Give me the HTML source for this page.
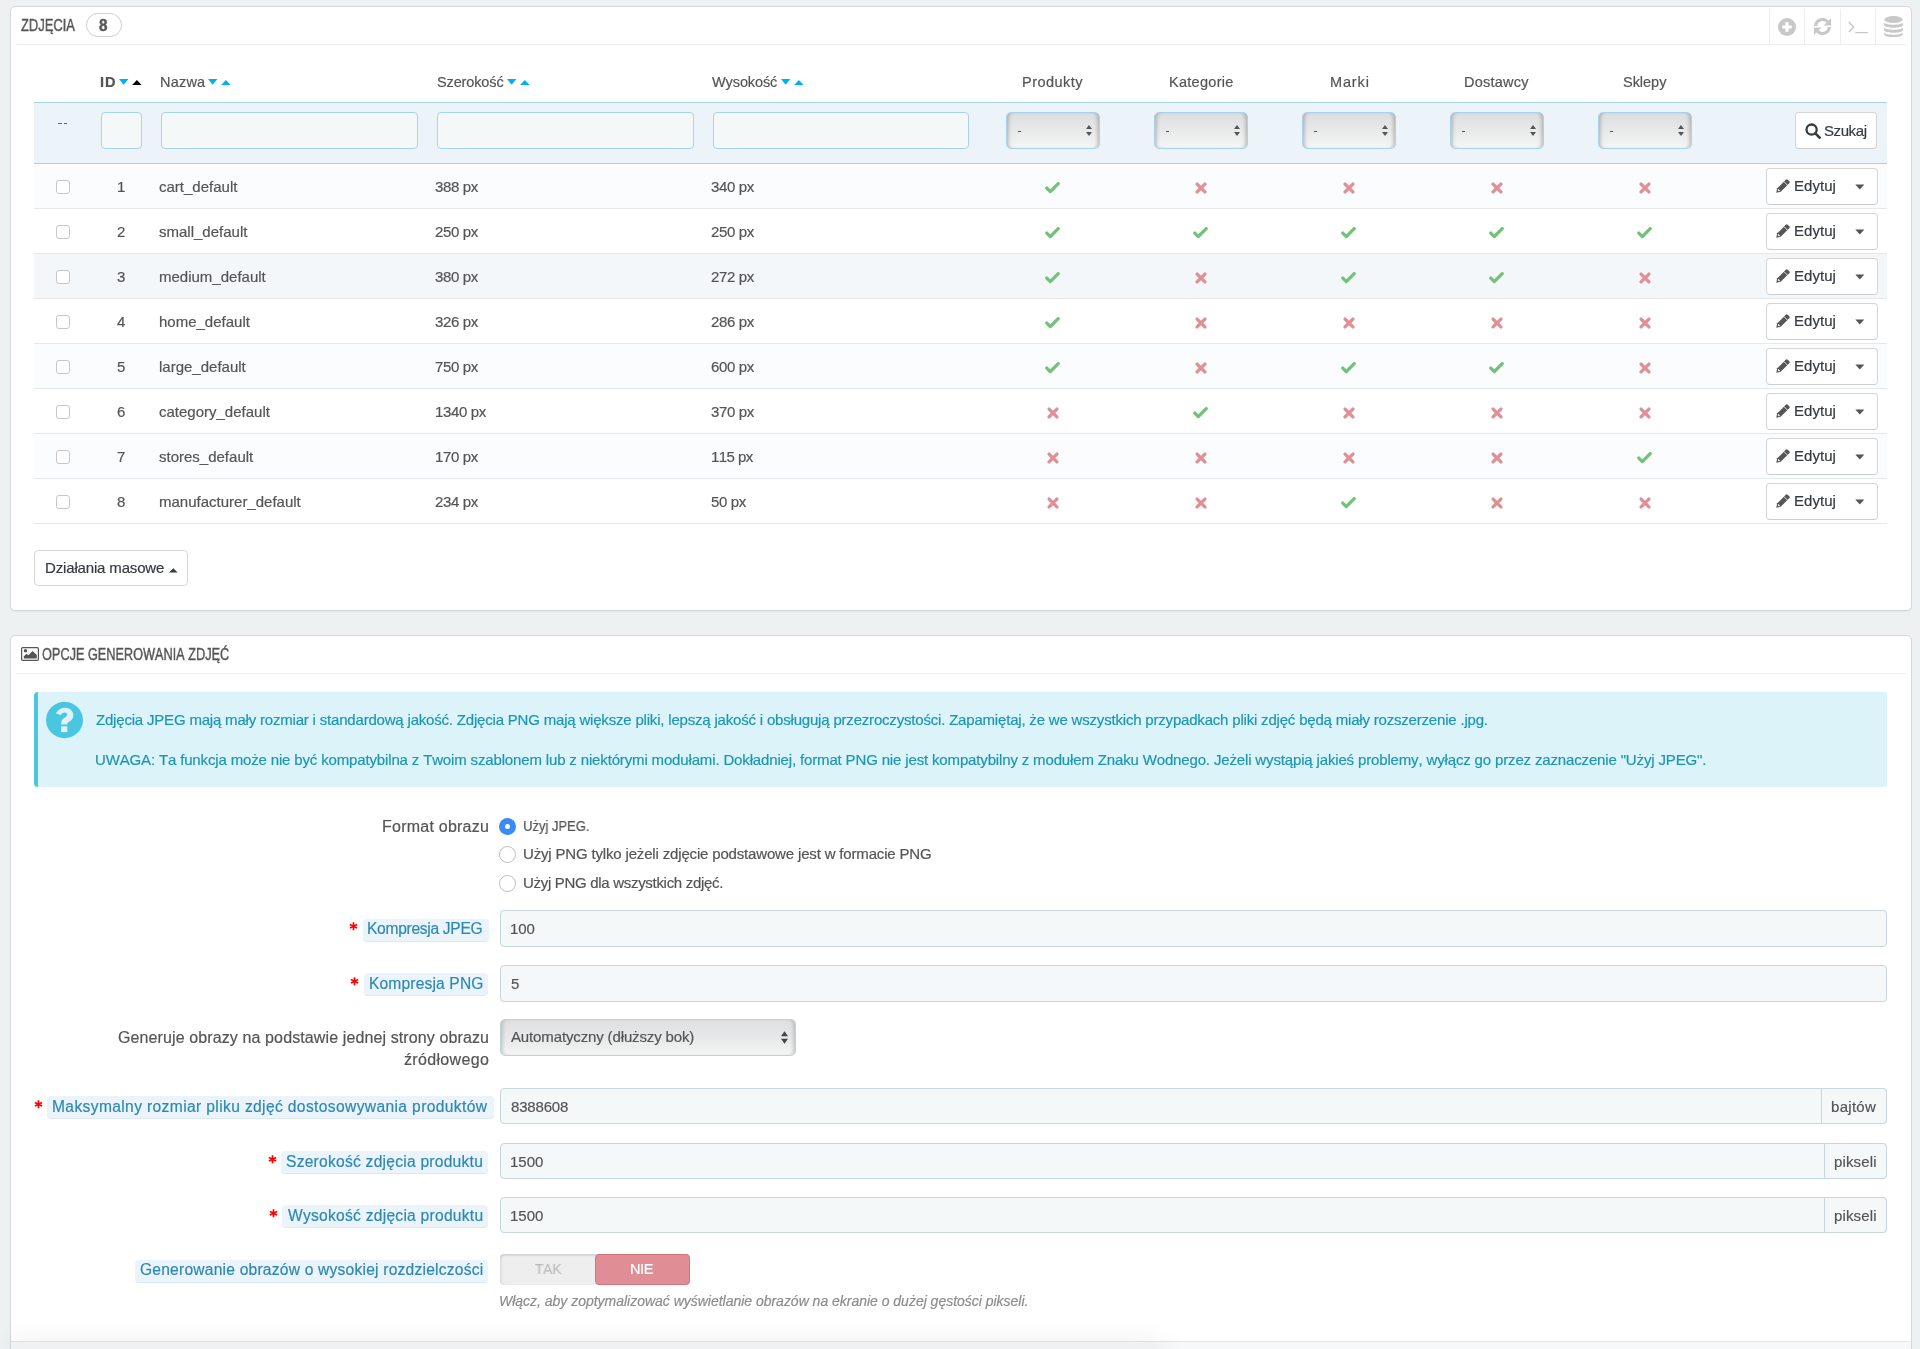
<!DOCTYPE html><html><head><meta charset="utf-8"><style>
*{box-sizing:border-box;margin:0;padding:0}
html,body{width:1920px;height:1349px;overflow:hidden}
body{background:#eef1f2;font-family:"Liberation Sans",sans-serif;color:#555;position:relative;font-size:15px;font-kerning:none}
.abs{position:absolute}
.panel{position:absolute;background:#fff;border:1px solid #d3d8db;border-radius:5px;box-shadow:0 1px 1px rgba(0,0,0,0.04)}
.hd{position:absolute;white-space:nowrap;color:#555;transform-origin:0 0;line-height:20px;font-size:17.4px;-webkit-text-stroke:0.45px #555;will-change:transform}
.hline{position:absolute;height:1px;background:#eeeeee}
.tx{position:absolute;white-space:nowrap;will-change:transform;-webkit-text-stroke-width:0.2px}
.ic{position:absolute;display:block}
.sep{position:absolute;width:1px;background:#eeeeee;top:9px;height:35px}
.finput{position:absolute;border:1px solid #a9d3ec;border-radius:4px;background:#f5f8f9;height:37px;top:112px}
.fsel{position:absolute;top:112px;width:94px;height:37px;border:1px solid #a9d3ec;border-radius:5px;background:linear-gradient(#dcdddf,#e9eaea 55%,#f6f6f6);box-shadow:inset 4px 0 4px -3px rgba(0,0,0,.28),inset -4px 0 4px -3px rgba(0,0,0,.28)}
.arr{position:absolute;width:0;height:0;border-left:3px solid transparent;border-right:3px solid transparent}
.cb{position:absolute;width:14px;height:14px;border:1px solid #c7c7c7;border-radius:3px;background:#fff;left:56px}
.row{position:absolute;left:34px;width:1853px;height:45px;border-bottom:1px solid #e5e9ec}
.btn{position:absolute;background:#fff;border:1px solid #d6d6d6;border-bottom-color:#cdcdcd;border-radius:4px}
.lblbox{position:absolute;height:22px;background:#ebf4fb;border-radius:4px;box-shadow:0 1px 0 #dde9f2}
.inp{position:absolute;left:500px;width:1387px;height:37px;border:1px solid #c9d6dc;border-radius:4px;background:#f5f8f9}
.addon{position:absolute;top:-1px;right:-1px;height:37px;border:1px solid #c9d6dc;border-radius:0 4px 4px 0;background:#f5f8f9}
</style></head><body>
<div class="panel" style="left:10px;top:6px;width:1902px;height:605px"></div>
<div class="hd" style="left:21.09px;top:14.97px;transform:scaleX(0.7439)">ZDJĘCIA</div>
<div class="abs" style="left:86px;top:13px;width:36px;height:24px;border:1px solid #cfcfcf;border-radius:12px;background:#fff"></div>
<div class="hd" style="font-weight:bold;left:98.55px;top:14.97px;transform:scaleX(0.8682)">8</div>
<div class="hline" style="left:15px;top:44px;width:1891px"></div>
<div class="sep" style="left:1769px"></div>
<div class="sep" style="left:1804px"></div>
<div class="sep" style="left:1840px"></div>
<div class="sep" style="left:1875px"></div>
<svg class="ic" style="left:1778px;top:18px" width="18" height="18" viewBox="0 0 18 18"><circle cx="9" cy="9" r="9" fill="#c8c8c8"/><path d="M9 4.3V13.7M4.3 9H13.7" stroke="#fff" stroke-width="3.2"/></svg>
<svg class="ic" style="left:1813px;top:17px" width="19" height="19" viewBox="0 0 19 19"><path d="M2.6 9A6.9 6.9 0 0 1 15.2 5.6" fill="none" stroke="#c8c8c8" stroke-width="3.2"/><path d="M18 1.2V8.6H10.6Z" fill="#c8c8c8"/><path d="M16.4 10A6.9 6.9 0 0 1 3.8 13.4" fill="none" stroke="#c8c8c8" stroke-width="3.2"/><path d="M1 17.8V10.4H8.4Z" fill="#c8c8c8"/></svg>
<svg class="ic" style="left:1848px;top:21px" width="21" height="13" viewBox="0 0 21 13"><path d="M0.8 0.9L5.8 5.9L0.8 10.9" fill="none" stroke="#c8c8c8" stroke-width="1.4"/><path d="M7.3 11.6H20" stroke="#c8c8c8" stroke-width="1.3"/></svg>
<svg class="ic" style="left:1884px;top:16px" width="19" height="22" viewBox="0 0 19 22"><ellipse cx="9.5" cy="3.6" rx="9.3" ry="3.5" fill="#c8c8c8"/><path d="M0.2 5.9C0.2 9.6 18.8 9.6 18.8 5.9V9C18.8 12.7 0.2 12.7 0.2 9Z" fill="#c8c8c8"/><path d="M0.2 11C0.2 14.7 18.8 14.7 18.8 11V14C18.8 17.7 0.2 17.7 0.2 14Z" fill="#c8c8c8"/><path d="M0.2 16C0.2 19.7 18.8 19.7 18.8 16V18.2C18.8 22 0.2 22 0.2 18.2Z" fill="#c8c8c8"/></svg>
<div class="tx" style="left:100.03px;top:72.47px;font-size:14.5px;line-height:20px;letter-spacing:0.8759px;font-weight:bold;color:#555555">ID</div>
<svg class="ic" style="left:119.4px;top:79px" width="23" height="6" viewBox="0 0 23 6"><path d="M0 0H9.4L4.7 5.7Z" fill="#00aff0"/><path d="M13.2 5.9H22.6L17.9 0.9Z" fill="#000"/></svg>
<div class="tx" style="left:159.81px;top:72.47px;font-size:14.5px;line-height:20px;letter-spacing:0.2130px;color:#555555">Nazwa</div>
<svg class="ic" style="left:208.4px;top:79px" width="23" height="6" viewBox="0 0 23 6"><path d="M0 0H9.4L4.7 5.7Z" fill="#00aff0"/><path d="M13.2 5.9H22.6L17.9 0.9Z" fill="#00aff0"/></svg>
<div class="tx" style="left:436.65px;top:72.47px;font-size:14.5px;line-height:20px;letter-spacing:-0.1328px;color:#555555">Szerokość</div>
<svg class="ic" style="left:506.6px;top:79px" width="23" height="6" viewBox="0 0 23 6"><path d="M0 0H9.4L4.7 5.7Z" fill="#00aff0"/><path d="M13.2 5.9H22.6L17.9 0.9Z" fill="#00aff0"/></svg>
<div class="tx" style="left:712.34px;top:72.47px;font-size:14.5px;line-height:20px;letter-spacing:-0.1015px;color:#555555">Wysokość</div>
<svg class="ic" style="left:781.4px;top:79px" width="23" height="6" viewBox="0 0 23 6"><path d="M0 0H9.4L4.7 5.7Z" fill="#00aff0"/><path d="M13.2 5.9H22.6L17.9 0.9Z" fill="#00aff0"/></svg>
<div class="tx" style="left:1022.31px;top:72.47px;font-size:14.5px;line-height:20px;letter-spacing:0.4701px;color:#555555">Produkty</div>
<div class="tx" style="left:1168.61px;top:72.47px;font-size:14.5px;line-height:20px;letter-spacing:0.2807px;color:#555555">Kategorie</div>
<div class="tx" style="left:1329.51px;top:72.47px;font-size:14.5px;line-height:20px;letter-spacing:0.8535px;color:#555555">Marki</div>
<div class="tx" style="left:1464.01px;top:72.47px;font-size:14.5px;line-height:20px;letter-spacing:0.2390px;color:#555555">Dostawcy</div>
<div class="tx" style="left:1622.65px;top:72.47px;font-size:14.5px;line-height:20px;letter-spacing:-0.0284px;color:#555555">Sklepy</div>
<div class="abs" style="left:34px;top:102px;width:1853px;height:62px;background:#ecf4fa;border-top:1px solid #a6d1ec;border-bottom:1px solid #a6d1ec"></div>
<div class="abs" style="left:58px;top:123px;width:3.5px;height:1.4px;background:#666"></div><div class="abs" style="left:63.5px;top:123px;width:3.5px;height:1.4px;background:#666"></div>
<div class="finput" style="left:101px;width:41px"></div>
<div class="finput" style="left:161px;width:257px"></div>
<div class="finput" style="left:437px;width:257px"></div>
<div class="finput" style="left:713px;width:256px"></div>
<div class="fsel" style="left:1006px"><div class="abs" style="left:10.5px;top:18px;width:3.5px;height:1.3px;background:#555"></div><div class="arr" style="left:79px;top:12px;border-bottom:4.5px solid #555"></div><div class="arr" style="left:79px;top:19px;border-top:4.5px solid #555"></div></div>
<div class="fsel" style="left:1154px"><div class="abs" style="left:10.5px;top:18px;width:3.5px;height:1.3px;background:#555"></div><div class="arr" style="left:79px;top:12px;border-bottom:4.5px solid #555"></div><div class="arr" style="left:79px;top:19px;border-top:4.5px solid #555"></div></div>
<div class="fsel" style="left:1302px"><div class="abs" style="left:10.5px;top:18px;width:3.5px;height:1.3px;background:#555"></div><div class="arr" style="left:79px;top:12px;border-bottom:4.5px solid #555"></div><div class="arr" style="left:79px;top:19px;border-top:4.5px solid #555"></div></div>
<div class="fsel" style="left:1450px"><div class="abs" style="left:10.5px;top:18px;width:3.5px;height:1.3px;background:#555"></div><div class="arr" style="left:79px;top:12px;border-bottom:4.5px solid #555"></div><div class="arr" style="left:79px;top:19px;border-top:4.5px solid #555"></div></div>
<div class="fsel" style="left:1598px"><div class="abs" style="left:10.5px;top:18px;width:3.5px;height:1.3px;background:#555"></div><div class="arr" style="left:79px;top:12px;border-bottom:4.5px solid #555"></div><div class="arr" style="left:79px;top:19px;border-top:4.5px solid #555"></div></div>
<div class="btn" style="left:1795px;top:112px;width:82px;height:37px"></div>
<svg class="ic" style="left:1805px;top:123px" width="17" height="16" viewBox="0 0 17 16"><circle cx="6.6" cy="6.6" r="5.1" fill="none" stroke="#363a41" stroke-width="2.3"/><path d="M10.4 10.4L14.6 14.6" stroke="#363a41" stroke-width="2.7" stroke-linecap="round"/></svg>
<div class="tx" style="left:1824.33px;top:120.60px;font-size:15px;line-height:20px;letter-spacing:-0.4089px;color:#363a41">Szukaj</div>
<div class="row" style="top:164px;background:#fafcfe"></div>
<div class="cb" style="top:180px"></div>
<div class="tx" style="left:116.63px;top:176.60px;font-size:15px;line-height:20px;color:#555555">1</div>
<div class="tx" style="left:159.17px;top:176.60px;font-size:15px;line-height:20px;color:#555555">cart_default</div>
<div class="tx" style="left:435.43px;top:176.60px;font-size:15px;line-height:20px;letter-spacing:-0.3712px;color:#555555">388 px</div>
<div class="tx" style="left:711.23px;top:176.60px;font-size:15px;line-height:20px;letter-spacing:-0.3712px;color:#555555">340 px</div>
<div class="abs" style="left:1045.4px;top:181.8px"><svg width="15" height="12" viewBox="0 0 15 12" style="display:block"><path d="M1.8 6.1 L5.3 9.6 L13.2 1.7" fill="none" stroke="#72c279" stroke-width="3.3" stroke-linecap="round" stroke-linejoin="round"/></svg></div>
<div class="abs" style="left:1194.9px;top:181.8px"><svg width="12" height="12" viewBox="0 0 12 12" style="display:block"><path d="M2.1 2.1 L9.9 9.9 M9.9 2.1 L2.1 9.9" fill="none" stroke="#e08f95" stroke-width="3.3" stroke-linecap="round"/></svg></div>
<div class="abs" style="left:1342.9px;top:181.8px"><svg width="12" height="12" viewBox="0 0 12 12" style="display:block"><path d="M2.1 2.1 L9.9 9.9 M9.9 2.1 L2.1 9.9" fill="none" stroke="#e08f95" stroke-width="3.3" stroke-linecap="round"/></svg></div>
<div class="abs" style="left:1490.9px;top:181.8px"><svg width="12" height="12" viewBox="0 0 12 12" style="display:block"><path d="M2.1 2.1 L9.9 9.9 M9.9 2.1 L2.1 9.9" fill="none" stroke="#e08f95" stroke-width="3.3" stroke-linecap="round"/></svg></div>
<div class="abs" style="left:1638.9px;top:181.8px"><svg width="12" height="12" viewBox="0 0 12 12" style="display:block"><path d="M2.1 2.1 L9.9 9.9 M9.9 2.1 L2.1 9.9" fill="none" stroke="#e08f95" stroke-width="3.3" stroke-linecap="round"/></svg></div>
<div class="btn" style="left:1766px;top:168px;width:112px;height:37px"></div>
<svg class="ic" style="left:1775.3px;top:179px" width="15" height="15" viewBox="0 0 15 15"><g transform="rotate(-45 7.5 7.5)"><path d="M-1.3 7.5L2.4 5H14.6Q16 5 16 6.4V8.6Q16 10 14.6 10H2.4Z" fill="#555"/><path d="M12 4.6V10.4" stroke="#fff" stroke-width="0.8"/><path d="M2.2 6.4V8.6" stroke="#fff" stroke-width="1.2"/><path d="M3.5 5.5H11.6" stroke="#888" stroke-width="0.6"/></g></svg>
<div class="tx" style="left:1793.77px;top:176.40px;font-size:15px;line-height:20px;letter-spacing:0.0282px;color:#363a41">Edytuj</div>
<svg class="ic" style="left:1855px;top:184px" width="10" height="6" viewBox="0 0 10 6"><path d="M0.3 0.5H9.3L4.8 5.5Z" fill="#555"/></svg>
<div class="row" style="top:209px;background:#ffffff"></div>
<div class="cb" style="top:225px"></div>
<div class="tx" style="left:116.83px;top:221.60px;font-size:15px;line-height:20px;color:#555555">2</div>
<div class="tx" style="left:159.38px;top:221.60px;font-size:15px;line-height:20px;color:#555555">small_default</div>
<div class="tx" style="left:435.25px;top:221.60px;font-size:15px;line-height:20px;letter-spacing:-0.3712px;color:#555555">250 px</div>
<div class="tx" style="left:711.05px;top:221.60px;font-size:15px;line-height:20px;letter-spacing:-0.3712px;color:#555555">250 px</div>
<div class="abs" style="left:1045.4px;top:226.8px"><svg width="15" height="12" viewBox="0 0 15 12" style="display:block"><path d="M1.8 6.1 L5.3 9.6 L13.2 1.7" fill="none" stroke="#72c279" stroke-width="3.3" stroke-linecap="round" stroke-linejoin="round"/></svg></div>
<div class="abs" style="left:1193.4px;top:226.8px"><svg width="15" height="12" viewBox="0 0 15 12" style="display:block"><path d="M1.8 6.1 L5.3 9.6 L13.2 1.7" fill="none" stroke="#72c279" stroke-width="3.3" stroke-linecap="round" stroke-linejoin="round"/></svg></div>
<div class="abs" style="left:1341.4px;top:226.8px"><svg width="15" height="12" viewBox="0 0 15 12" style="display:block"><path d="M1.8 6.1 L5.3 9.6 L13.2 1.7" fill="none" stroke="#72c279" stroke-width="3.3" stroke-linecap="round" stroke-linejoin="round"/></svg></div>
<div class="abs" style="left:1489.4px;top:226.8px"><svg width="15" height="12" viewBox="0 0 15 12" style="display:block"><path d="M1.8 6.1 L5.3 9.6 L13.2 1.7" fill="none" stroke="#72c279" stroke-width="3.3" stroke-linecap="round" stroke-linejoin="round"/></svg></div>
<div class="abs" style="left:1637.4px;top:226.8px"><svg width="15" height="12" viewBox="0 0 15 12" style="display:block"><path d="M1.8 6.1 L5.3 9.6 L13.2 1.7" fill="none" stroke="#72c279" stroke-width="3.3" stroke-linecap="round" stroke-linejoin="round"/></svg></div>
<div class="btn" style="left:1766px;top:213px;width:112px;height:37px"></div>
<svg class="ic" style="left:1775.3px;top:224px" width="15" height="15" viewBox="0 0 15 15"><g transform="rotate(-45 7.5 7.5)"><path d="M-1.3 7.5L2.4 5H14.6Q16 5 16 6.4V8.6Q16 10 14.6 10H2.4Z" fill="#555"/><path d="M12 4.6V10.4" stroke="#fff" stroke-width="0.8"/><path d="M2.2 6.4V8.6" stroke="#fff" stroke-width="1.2"/><path d="M3.5 5.5H11.6" stroke="#888" stroke-width="0.6"/></g></svg>
<div class="tx" style="left:1793.77px;top:221.40px;font-size:15px;line-height:20px;letter-spacing:0.0282px;color:#363a41">Edytuj</div>
<svg class="ic" style="left:1855px;top:229px" width="10" height="6" viewBox="0 0 10 6"><path d="M0.3 0.5H9.3L4.8 5.5Z" fill="#555"/></svg>
<div class="row" style="top:254px;background:#f4f7f9"></div>
<div class="cb" style="top:270px"></div>
<div class="tx" style="left:116.88px;top:266.60px;font-size:15px;line-height:20px;color:#555555">3</div>
<div class="tx" style="left:158.81px;top:266.60px;font-size:15px;line-height:20px;color:#555555">medium_default</div>
<div class="tx" style="left:435.43px;top:266.60px;font-size:15px;line-height:20px;letter-spacing:-0.3712px;color:#555555">380 px</div>
<div class="tx" style="left:711.05px;top:266.60px;font-size:15px;line-height:20px;letter-spacing:-0.3712px;color:#555555">272 px</div>
<div class="abs" style="left:1045.4px;top:271.8px"><svg width="15" height="12" viewBox="0 0 15 12" style="display:block"><path d="M1.8 6.1 L5.3 9.6 L13.2 1.7" fill="none" stroke="#72c279" stroke-width="3.3" stroke-linecap="round" stroke-linejoin="round"/></svg></div>
<div class="abs" style="left:1194.9px;top:271.8px"><svg width="12" height="12" viewBox="0 0 12 12" style="display:block"><path d="M2.1 2.1 L9.9 9.9 M9.9 2.1 L2.1 9.9" fill="none" stroke="#e08f95" stroke-width="3.3" stroke-linecap="round"/></svg></div>
<div class="abs" style="left:1341.4px;top:271.8px"><svg width="15" height="12" viewBox="0 0 15 12" style="display:block"><path d="M1.8 6.1 L5.3 9.6 L13.2 1.7" fill="none" stroke="#72c279" stroke-width="3.3" stroke-linecap="round" stroke-linejoin="round"/></svg></div>
<div class="abs" style="left:1489.4px;top:271.8px"><svg width="15" height="12" viewBox="0 0 15 12" style="display:block"><path d="M1.8 6.1 L5.3 9.6 L13.2 1.7" fill="none" stroke="#72c279" stroke-width="3.3" stroke-linecap="round" stroke-linejoin="round"/></svg></div>
<div class="abs" style="left:1638.9px;top:271.8px"><svg width="12" height="12" viewBox="0 0 12 12" style="display:block"><path d="M2.1 2.1 L9.9 9.9 M9.9 2.1 L2.1 9.9" fill="none" stroke="#e08f95" stroke-width="3.3" stroke-linecap="round"/></svg></div>
<div class="btn" style="left:1766px;top:258px;width:112px;height:37px"></div>
<svg class="ic" style="left:1775.3px;top:269px" width="15" height="15" viewBox="0 0 15 15"><g transform="rotate(-45 7.5 7.5)"><path d="M-1.3 7.5L2.4 5H14.6Q16 5 16 6.4V8.6Q16 10 14.6 10H2.4Z" fill="#555"/><path d="M12 4.6V10.4" stroke="#fff" stroke-width="0.8"/><path d="M2.2 6.4V8.6" stroke="#fff" stroke-width="1.2"/><path d="M3.5 5.5H11.6" stroke="#888" stroke-width="0.6"/></g></svg>
<div class="tx" style="left:1793.77px;top:266.40px;font-size:15px;line-height:20px;letter-spacing:0.0282px;color:#363a41">Edytuj</div>
<svg class="ic" style="left:1855px;top:274px" width="10" height="6" viewBox="0 0 10 6"><path d="M0.3 0.5H9.3L4.8 5.5Z" fill="#555"/></svg>
<div class="row" style="top:299px;background:#ffffff"></div>
<div class="cb" style="top:315px"></div>
<div class="tx" style="left:116.88px;top:311.60px;font-size:15px;line-height:20px;color:#555555">4</div>
<div class="tx" style="left:158.77px;top:311.60px;font-size:15px;line-height:20px;color:#555555">home_default</div>
<div class="tx" style="left:435.43px;top:311.60px;font-size:15px;line-height:20px;letter-spacing:-0.3712px;color:#555555">326 px</div>
<div class="tx" style="left:711.05px;top:311.60px;font-size:15px;line-height:20px;letter-spacing:-0.3712px;color:#555555">286 px</div>
<div class="abs" style="left:1045.4px;top:316.8px"><svg width="15" height="12" viewBox="0 0 15 12" style="display:block"><path d="M1.8 6.1 L5.3 9.6 L13.2 1.7" fill="none" stroke="#72c279" stroke-width="3.3" stroke-linecap="round" stroke-linejoin="round"/></svg></div>
<div class="abs" style="left:1194.9px;top:316.8px"><svg width="12" height="12" viewBox="0 0 12 12" style="display:block"><path d="M2.1 2.1 L9.9 9.9 M9.9 2.1 L2.1 9.9" fill="none" stroke="#e08f95" stroke-width="3.3" stroke-linecap="round"/></svg></div>
<div class="abs" style="left:1342.9px;top:316.8px"><svg width="12" height="12" viewBox="0 0 12 12" style="display:block"><path d="M2.1 2.1 L9.9 9.9 M9.9 2.1 L2.1 9.9" fill="none" stroke="#e08f95" stroke-width="3.3" stroke-linecap="round"/></svg></div>
<div class="abs" style="left:1490.9px;top:316.8px"><svg width="12" height="12" viewBox="0 0 12 12" style="display:block"><path d="M2.1 2.1 L9.9 9.9 M9.9 2.1 L2.1 9.9" fill="none" stroke="#e08f95" stroke-width="3.3" stroke-linecap="round"/></svg></div>
<div class="abs" style="left:1638.9px;top:316.8px"><svg width="12" height="12" viewBox="0 0 12 12" style="display:block"><path d="M2.1 2.1 L9.9 9.9 M9.9 2.1 L2.1 9.9" fill="none" stroke="#e08f95" stroke-width="3.3" stroke-linecap="round"/></svg></div>
<div class="btn" style="left:1766px;top:303px;width:112px;height:37px"></div>
<svg class="ic" style="left:1775.3px;top:314px" width="15" height="15" viewBox="0 0 15 15"><g transform="rotate(-45 7.5 7.5)"><path d="M-1.3 7.5L2.4 5H14.6Q16 5 16 6.4V8.6Q16 10 14.6 10H2.4Z" fill="#555"/><path d="M12 4.6V10.4" stroke="#fff" stroke-width="0.8"/><path d="M2.2 6.4V8.6" stroke="#fff" stroke-width="1.2"/><path d="M3.5 5.5H11.6" stroke="#888" stroke-width="0.6"/></g></svg>
<div class="tx" style="left:1793.77px;top:311.40px;font-size:15px;line-height:20px;letter-spacing:0.0282px;color:#363a41">Edytuj</div>
<svg class="ic" style="left:1855px;top:319px" width="10" height="6" viewBox="0 0 10 6"><path d="M0.3 0.5H9.3L4.8 5.5Z" fill="#555"/></svg>
<div class="row" style="top:344px;background:#fafcfe"></div>
<div class="cb" style="top:360px"></div>
<div class="tx" style="left:116.84px;top:356.60px;font-size:15px;line-height:20px;color:#555555">5</div>
<div class="tx" style="left:158.80px;top:356.60px;font-size:15px;line-height:20px;color:#555555">large_default</div>
<div class="tx" style="left:435.24px;top:356.60px;font-size:15px;line-height:20px;letter-spacing:-0.3712px;color:#555555">750 px</div>
<div class="tx" style="left:711.03px;top:356.60px;font-size:15px;line-height:20px;letter-spacing:-0.3712px;color:#555555">600 px</div>
<div class="abs" style="left:1045.4px;top:361.8px"><svg width="15" height="12" viewBox="0 0 15 12" style="display:block"><path d="M1.8 6.1 L5.3 9.6 L13.2 1.7" fill="none" stroke="#72c279" stroke-width="3.3" stroke-linecap="round" stroke-linejoin="round"/></svg></div>
<div class="abs" style="left:1194.9px;top:361.8px"><svg width="12" height="12" viewBox="0 0 12 12" style="display:block"><path d="M2.1 2.1 L9.9 9.9 M9.9 2.1 L2.1 9.9" fill="none" stroke="#e08f95" stroke-width="3.3" stroke-linecap="round"/></svg></div>
<div class="abs" style="left:1341.4px;top:361.8px"><svg width="15" height="12" viewBox="0 0 15 12" style="display:block"><path d="M1.8 6.1 L5.3 9.6 L13.2 1.7" fill="none" stroke="#72c279" stroke-width="3.3" stroke-linecap="round" stroke-linejoin="round"/></svg></div>
<div class="abs" style="left:1489.4px;top:361.8px"><svg width="15" height="12" viewBox="0 0 15 12" style="display:block"><path d="M1.8 6.1 L5.3 9.6 L13.2 1.7" fill="none" stroke="#72c279" stroke-width="3.3" stroke-linecap="round" stroke-linejoin="round"/></svg></div>
<div class="abs" style="left:1638.9px;top:361.8px"><svg width="12" height="12" viewBox="0 0 12 12" style="display:block"><path d="M2.1 2.1 L9.9 9.9 M9.9 2.1 L2.1 9.9" fill="none" stroke="#e08f95" stroke-width="3.3" stroke-linecap="round"/></svg></div>
<div class="btn" style="left:1766px;top:348px;width:112px;height:37px"></div>
<svg class="ic" style="left:1775.3px;top:359px" width="15" height="15" viewBox="0 0 15 15"><g transform="rotate(-45 7.5 7.5)"><path d="M-1.3 7.5L2.4 5H14.6Q16 5 16 6.4V8.6Q16 10 14.6 10H2.4Z" fill="#555"/><path d="M12 4.6V10.4" stroke="#fff" stroke-width="0.8"/><path d="M2.2 6.4V8.6" stroke="#fff" stroke-width="1.2"/><path d="M3.5 5.5H11.6" stroke="#888" stroke-width="0.6"/></g></svg>
<div class="tx" style="left:1793.77px;top:356.40px;font-size:15px;line-height:20px;letter-spacing:0.0282px;color:#363a41">Edytuj</div>
<svg class="ic" style="left:1855px;top:364px" width="10" height="6" viewBox="0 0 10 6"><path d="M0.3 0.5H9.3L4.8 5.5Z" fill="#555"/></svg>
<div class="row" style="top:389px;background:#ffffff"></div>
<div class="cb" style="top:405px"></div>
<div class="tx" style="left:116.78px;top:401.60px;font-size:15px;line-height:20px;color:#555555">6</div>
<div class="tx" style="left:159.17px;top:401.60px;font-size:15px;line-height:20px;color:#555555">category_default</div>
<div class="tx" style="left:434.86px;top:401.60px;font-size:15px;line-height:20px;letter-spacing:-0.3700px;color:#555555">1340 px</div>
<div class="tx" style="left:711.23px;top:401.60px;font-size:15px;line-height:20px;letter-spacing:-0.3712px;color:#555555">370 px</div>
<div class="abs" style="left:1046.9px;top:406.8px"><svg width="12" height="12" viewBox="0 0 12 12" style="display:block"><path d="M2.1 2.1 L9.9 9.9 M9.9 2.1 L2.1 9.9" fill="none" stroke="#e08f95" stroke-width="3.3" stroke-linecap="round"/></svg></div>
<div class="abs" style="left:1193.4px;top:406.8px"><svg width="15" height="12" viewBox="0 0 15 12" style="display:block"><path d="M1.8 6.1 L5.3 9.6 L13.2 1.7" fill="none" stroke="#72c279" stroke-width="3.3" stroke-linecap="round" stroke-linejoin="round"/></svg></div>
<div class="abs" style="left:1342.9px;top:406.8px"><svg width="12" height="12" viewBox="0 0 12 12" style="display:block"><path d="M2.1 2.1 L9.9 9.9 M9.9 2.1 L2.1 9.9" fill="none" stroke="#e08f95" stroke-width="3.3" stroke-linecap="round"/></svg></div>
<div class="abs" style="left:1490.9px;top:406.8px"><svg width="12" height="12" viewBox="0 0 12 12" style="display:block"><path d="M2.1 2.1 L9.9 9.9 M9.9 2.1 L2.1 9.9" fill="none" stroke="#e08f95" stroke-width="3.3" stroke-linecap="round"/></svg></div>
<div class="abs" style="left:1638.9px;top:406.8px"><svg width="12" height="12" viewBox="0 0 12 12" style="display:block"><path d="M2.1 2.1 L9.9 9.9 M9.9 2.1 L2.1 9.9" fill="none" stroke="#e08f95" stroke-width="3.3" stroke-linecap="round"/></svg></div>
<div class="btn" style="left:1766px;top:393px;width:112px;height:37px"></div>
<svg class="ic" style="left:1775.3px;top:404px" width="15" height="15" viewBox="0 0 15 15"><g transform="rotate(-45 7.5 7.5)"><path d="M-1.3 7.5L2.4 5H14.6Q16 5 16 6.4V8.6Q16 10 14.6 10H2.4Z" fill="#555"/><path d="M12 4.6V10.4" stroke="#fff" stroke-width="0.8"/><path d="M2.2 6.4V8.6" stroke="#fff" stroke-width="1.2"/><path d="M3.5 5.5H11.6" stroke="#888" stroke-width="0.6"/></g></svg>
<div class="tx" style="left:1793.77px;top:401.40px;font-size:15px;line-height:20px;letter-spacing:0.0282px;color:#363a41">Edytuj</div>
<svg class="ic" style="left:1855px;top:409px" width="10" height="6" viewBox="0 0 10 6"><path d="M0.3 0.5H9.3L4.8 5.5Z" fill="#555"/></svg>
<div class="row" style="top:434px;background:#fafcfe"></div>
<div class="cb" style="top:450px"></div>
<div class="tx" style="left:116.82px;top:446.60px;font-size:15px;line-height:20px;color:#555555">7</div>
<div class="tx" style="left:159.38px;top:446.60px;font-size:15px;line-height:20px;color:#555555">stores_default</div>
<div class="tx" style="left:434.86px;top:446.60px;font-size:15px;line-height:20px;letter-spacing:-0.3712px;color:#555555">170 px</div>
<div class="tx" style="left:710.66px;top:446.60px;font-size:15px;line-height:20px;letter-spacing:-0.5574px;color:#555555">115 px</div>
<div class="abs" style="left:1046.9px;top:451.8px"><svg width="12" height="12" viewBox="0 0 12 12" style="display:block"><path d="M2.1 2.1 L9.9 9.9 M9.9 2.1 L2.1 9.9" fill="none" stroke="#e08f95" stroke-width="3.3" stroke-linecap="round"/></svg></div>
<div class="abs" style="left:1194.9px;top:451.8px"><svg width="12" height="12" viewBox="0 0 12 12" style="display:block"><path d="M2.1 2.1 L9.9 9.9 M9.9 2.1 L2.1 9.9" fill="none" stroke="#e08f95" stroke-width="3.3" stroke-linecap="round"/></svg></div>
<div class="abs" style="left:1342.9px;top:451.8px"><svg width="12" height="12" viewBox="0 0 12 12" style="display:block"><path d="M2.1 2.1 L9.9 9.9 M9.9 2.1 L2.1 9.9" fill="none" stroke="#e08f95" stroke-width="3.3" stroke-linecap="round"/></svg></div>
<div class="abs" style="left:1490.9px;top:451.8px"><svg width="12" height="12" viewBox="0 0 12 12" style="display:block"><path d="M2.1 2.1 L9.9 9.9 M9.9 2.1 L2.1 9.9" fill="none" stroke="#e08f95" stroke-width="3.3" stroke-linecap="round"/></svg></div>
<div class="abs" style="left:1637.4px;top:451.8px"><svg width="15" height="12" viewBox="0 0 15 12" style="display:block"><path d="M1.8 6.1 L5.3 9.6 L13.2 1.7" fill="none" stroke="#72c279" stroke-width="3.3" stroke-linecap="round" stroke-linejoin="round"/></svg></div>
<div class="btn" style="left:1766px;top:438px;width:112px;height:37px"></div>
<svg class="ic" style="left:1775.3px;top:449px" width="15" height="15" viewBox="0 0 15 15"><g transform="rotate(-45 7.5 7.5)"><path d="M-1.3 7.5L2.4 5H14.6Q16 5 16 6.4V8.6Q16 10 14.6 10H2.4Z" fill="#555"/><path d="M12 4.6V10.4" stroke="#fff" stroke-width="0.8"/><path d="M2.2 6.4V8.6" stroke="#fff" stroke-width="1.2"/><path d="M3.5 5.5H11.6" stroke="#888" stroke-width="0.6"/></g></svg>
<div class="tx" style="left:1793.77px;top:446.40px;font-size:15px;line-height:20px;letter-spacing:0.0282px;color:#363a41">Edytuj</div>
<svg class="ic" style="left:1855px;top:454px" width="10" height="6" viewBox="0 0 10 6"><path d="M0.3 0.5H9.3L4.8 5.5Z" fill="#555"/></svg>
<div class="row" style="top:479px;background:#ffffff"></div>
<div class="cb" style="top:495px"></div>
<div class="tx" style="left:116.83px;top:491.60px;font-size:15px;line-height:20px;color:#555555">8</div>
<div class="tx" style="left:158.81px;top:491.60px;font-size:15px;line-height:20px;color:#555555">manufacturer_default</div>
<div class="tx" style="left:435.25px;top:491.60px;font-size:15px;line-height:20px;letter-spacing:-0.3712px;color:#555555">234 px</div>
<div class="tx" style="left:711.20px;top:491.60px;font-size:15px;line-height:20px;letter-spacing:-0.3728px;color:#555555">50 px</div>
<div class="abs" style="left:1046.9px;top:496.8px"><svg width="12" height="12" viewBox="0 0 12 12" style="display:block"><path d="M2.1 2.1 L9.9 9.9 M9.9 2.1 L2.1 9.9" fill="none" stroke="#e08f95" stroke-width="3.3" stroke-linecap="round"/></svg></div>
<div class="abs" style="left:1194.9px;top:496.8px"><svg width="12" height="12" viewBox="0 0 12 12" style="display:block"><path d="M2.1 2.1 L9.9 9.9 M9.9 2.1 L2.1 9.9" fill="none" stroke="#e08f95" stroke-width="3.3" stroke-linecap="round"/></svg></div>
<div class="abs" style="left:1341.4px;top:496.8px"><svg width="15" height="12" viewBox="0 0 15 12" style="display:block"><path d="M1.8 6.1 L5.3 9.6 L13.2 1.7" fill="none" stroke="#72c279" stroke-width="3.3" stroke-linecap="round" stroke-linejoin="round"/></svg></div>
<div class="abs" style="left:1490.9px;top:496.8px"><svg width="12" height="12" viewBox="0 0 12 12" style="display:block"><path d="M2.1 2.1 L9.9 9.9 M9.9 2.1 L2.1 9.9" fill="none" stroke="#e08f95" stroke-width="3.3" stroke-linecap="round"/></svg></div>
<div class="abs" style="left:1638.9px;top:496.8px"><svg width="12" height="12" viewBox="0 0 12 12" style="display:block"><path d="M2.1 2.1 L9.9 9.9 M9.9 2.1 L2.1 9.9" fill="none" stroke="#e08f95" stroke-width="3.3" stroke-linecap="round"/></svg></div>
<div class="btn" style="left:1766px;top:483px;width:112px;height:37px"></div>
<svg class="ic" style="left:1775.3px;top:494px" width="15" height="15" viewBox="0 0 15 15"><g transform="rotate(-45 7.5 7.5)"><path d="M-1.3 7.5L2.4 5H14.6Q16 5 16 6.4V8.6Q16 10 14.6 10H2.4Z" fill="#555"/><path d="M12 4.6V10.4" stroke="#fff" stroke-width="0.8"/><path d="M2.2 6.4V8.6" stroke="#fff" stroke-width="1.2"/><path d="M3.5 5.5H11.6" stroke="#888" stroke-width="0.6"/></g></svg>
<div class="tx" style="left:1793.77px;top:491.40px;font-size:15px;line-height:20px;letter-spacing:0.0282px;color:#363a41">Edytuj</div>
<svg class="ic" style="left:1855px;top:499px" width="10" height="6" viewBox="0 0 10 6"><path d="M0.3 0.5H9.3L4.8 5.5Z" fill="#555"/></svg>
<div class="btn" style="left:34px;top:550px;width:154px;height:36px;border-color:#d6d6d6"></div>
<div class="tx" style="left:44.57px;top:558.30px;font-size:15px;line-height:20px;letter-spacing:-0.1561px;color:#363a41">Działania masowe</div>
<svg class="ic" style="left:168.5px;top:567.5px" width="9" height="5" viewBox="0 0 9 5"><path d="M0 4.6H8.6L4.3 0.2Z" fill="#363a41"/></svg>
<div class="panel" style="left:10px;top:635px;width:1902px;height:760px"></div>
<svg class="ic" style="left:21px;top:647px" width="18" height="14" viewBox="0 0 18 14"><rect x="0.6" y="0.6" width="16.8" height="12.8" rx="1.2" fill="none" stroke="#555" stroke-width="1.2"/><circle cx="4.5" cy="3.8" r="1.7" fill="#555"/><path d="M2.8 11.4V9.6L5.4 6.8L7.4 8.2L11.6 3.9L15.8 8V11.4Z" fill="#555"/></svg>
<div class="hd" style="left:41.90px;top:643.72px;transform:scaleX(0.7309)">OPCJE GENEROWANIA ZDJĘĆ</div>
<div class="hline" style="left:15px;top:673px;width:1891px"></div>
<div class="abs" style="left:34px;top:692px;width:1853px;height:95px;background:#dcf3f9;border-left:4px solid #4ac6df;border-radius:4px 2px 2px 4px"></div>
<svg class="ic" style="left:46px;top:702px" width="37" height="37" viewBox="0 0 37 37"><ellipse cx="18.5" cy="18" rx="18.5" ry="18.2" fill="#4ac6e0"/><path d="M9.9 11.3C12 7.8 15 5.8 19 5.8C23.8 5.8 27.3 8.9 27.3 13.3C27.3 17.3 24.6 18.9 22.6 20.1C21.6 20.8 21.3 21.6 21.3 22.6H15.2V21.2C15.2 18.2 16.8 16.7 18.9 15.4C20.4 14.5 21.2 13.8 21.2 12.6C21.2 11.3 20.1 10.4 18.7 10.4C17.1 10.4 15.9 11.4 14.6 13.1Z" fill="#dcf3f9"/><rect x="15.1" y="24.3" width="6.2" height="5.8" fill="#dcf3f9"/></svg>
<div class="tx" style="left:96.32px;top:709.80px;font-size:15px;line-height:20px;letter-spacing:-0.1914px;color:#1c97b1">Zdjęcia JPEG mają mały rozmiar i standardową jakość. Zdjęcia PNG mają większe pliki, lepszą jakość i obsługują przezroczystości. Zapamiętaj, że we wszystkich przypadkach pliki zdjęć będą miały rozszerzenie .jpg.</div>
<div class="tx" style="left:94.64px;top:749.80px;font-size:15px;line-height:20px;letter-spacing:-0.1513px;color:#1c97b1">UWAGA: Ta funkcja może nie być kompatybilna z Twoim szablonem lub z niektórymi modułami. Dokładniej, format PNG nie jest kompatybilny z modułem Znaku Wodnego. Jeżeli wystąpią jakieś problemy, wyłącz go przez zaznaczenie "Użyj JPEG".</div>
<div class="tx" style="left:381.99px;top:816.85px;font-size:16px;line-height:20px;letter-spacing:0.2355px;color:#555555">Format obrazu</div>
<div class="abs" style="left:499px;top:817.9px;width:17px;height:17px;border-radius:50%;background:#3b8af5"><div class="abs" style="left:6px;top:6px;width:5px;height:5px;border-radius:50%;background:#fff"></div></div>
<div class="tx" style="left:523.45px;top:815.60px;font-size:15px;line-height:20px;color:#555555;transform:scaleX(0.8657);transform-origin:1.16px 0">Użyj JPEG.</div>
<div class="abs" style="left:499px;top:846.0px;width:17px;height:17px;border-radius:50%;border:1px solid #bdbdbd;background:#fff"></div>
<div class="tx" style="left:523.45px;top:844.00px;font-size:15px;line-height:20px;letter-spacing:-0.1662px;color:#555555">Użyj PNG tylko jeżeli zdjęcie podstawowe jest w formacie PNG</div>
<div class="abs" style="left:499px;top:874.8px;width:17px;height:17px;border-radius:50%;border:1px solid #bdbdbd;background:#fff"></div>
<div class="tx" style="left:523.45px;top:872.80px;font-size:15px;line-height:20px;letter-spacing:-0.3037px;color:#555555">Użyj PNG dla wszystkich zdjęć.</div>
<div class="inp" style="top:910px;height:37px"></div>
<div class="tx" style="left:510.36px;top:918.50px;font-size:15px;line-height:20px;letter-spacing:-0.1026px;color:#555555">100</div>
<div class="lblbox" style="left:363px;top:919px;width:125.5px"></div>
<div class="tx" style="left:367.47px;top:919.39px;font-size:15.6px;line-height:20px;letter-spacing:-0.3012px;color:#2e88b3">Kompresja JPEG</div>
<svg class="ic" style="left:349.3px;top:922.2px" width="9" height="9" viewBox="0 0 9 9"><path d="M4.5 0.2V8.2M0.9 2.4L8.1 6M8.1 2.4L0.9 6" stroke="#f00" stroke-width="1.7"/></svg>
<div class="inp" style="top:965px;height:37px"></div>
<div class="tx" style="left:510.90px;top:973.50px;font-size:15px;line-height:20px;color:#555555">5</div>
<div class="lblbox" style="left:364.2px;top:973px;width:124.3px"></div>
<div class="tx" style="left:368.72px;top:974.19px;font-size:15.6px;line-height:20px;letter-spacing:0.1478px;color:#2e88b3">Kompresja PNG</div>
<svg class="ic" style="left:350.3px;top:977.2px" width="9" height="9" viewBox="0 0 9 9"><path d="M4.5 0.2V8.2M0.9 2.4L8.1 6M8.1 2.4L0.9 6" stroke="#f00" stroke-width="1.7"/></svg>
<div class="abs" style="left:500px;top:1019px;width:296px;height:37px;border:1px solid #c3d2d8;border-radius:5px;background:linear-gradient(#dedfe0,#e8e9ea 55%,#f5f5f5);box-shadow:inset 4px 0 4px -3px rgba(0,0,0,.22),inset -4px 0 4px -3px rgba(0,0,0,.22)"></div>
<div class="tx" style="left:510.97px;top:1026.70px;font-size:15px;line-height:20px;letter-spacing:-0.1354px;color:#555555">Automatyczny (dłuższy bok)</div>
<svg class="ic" style="left:781px;top:1031px" width="7" height="13" viewBox="0 0 7 13"><path d="M0 5.2H7L3.5 0.2Z M0 7.8H7L3.5 12.8Z" fill="#444"/></svg>
<div class="tx" style="left:118.10px;top:1028.25px;font-size:16px;line-height:20px;letter-spacing:0.1124px;color:#555555">Generuje obrazy na podstawie jednej strony obrazu</div>
<div class="tx" style="left:403.86px;top:1049.95px;font-size:16px;line-height:20px;letter-spacing:0.3321px;color:#555555">źródłowego</div>
<div class="inp" style="top:1088px;height:36px"></div>
<div class="tx" style="left:510.86px;top:1096.50px;font-size:15px;line-height:20px;letter-spacing:-0.1848px;color:#555555">8388608</div>
<div class="addon" style="left:1821px;top:1088px;right:auto;width:66px;height:36px"></div>
<div class="tx" style="left:1830.94px;top:1096.50px;font-size:15px;line-height:20px;letter-spacing:0.2905px;color:#555555">bajtów</div>
<div class="lblbox" style="left:47.25px;top:1096px;width:446.8px"></div>
<div class="tx" style="left:52.47px;top:1096.84px;font-size:15.6px;line-height:20px;letter-spacing:0.3675px;color:#2e88b3">Maksymalny rozmiar pliku zdjęć dostosowywania produktów</div>
<svg class="ic" style="left:34.4px;top:1099.5px" width="9" height="9" viewBox="0 0 9 9"><path d="M4.5 0.2V8.2M0.9 2.4L8.1 6M8.1 2.4L0.9 6" stroke="#f00" stroke-width="1.7"/></svg>
<div class="inp" style="top:1143px;height:36px"></div>
<div class="tx" style="left:510.36px;top:1151.50px;font-size:15px;line-height:20px;color:#555555">1500</div>
<div class="addon" style="left:1824px;top:1143px;right:auto;width:63px;height:36px"></div>
<div class="tx" style="left:1834.24px;top:1151.50px;font-size:15px;line-height:20px;letter-spacing:0.1461px;color:#555555">pikseli</div>
<div class="lblbox" style="left:280.7px;top:1151px;width:207.8px"></div>
<div class="tx" style="left:286.20px;top:1152.09px;font-size:15.6px;line-height:20px;letter-spacing:0.2458px;color:#2e88b3">Szerokość zdjęcia produktu</div>
<svg class="ic" style="left:268.2px;top:1154.5px" width="9" height="9" viewBox="0 0 9 9"><path d="M4.5 0.2V8.2M0.9 2.4L8.1 6M8.1 2.4L0.9 6" stroke="#f00" stroke-width="1.7"/></svg>
<div class="inp" style="top:1197px;height:36px"></div>
<div class="tx" style="left:510.36px;top:1205.50px;font-size:15px;line-height:20px;color:#555555">1500</div>
<div class="addon" style="left:1824px;top:1197px;right:auto;width:63px;height:36px"></div>
<div class="tx" style="left:1834.24px;top:1205.50px;font-size:15px;line-height:20px;letter-spacing:0.1461px;color:#555555">pikseli</div>
<div class="lblbox" style="left:281.8px;top:1205px;width:206.7px"></div>
<div class="tx" style="left:287.94px;top:1206.09px;font-size:15.6px;line-height:20px;letter-spacing:0.2567px;color:#2e88b3">Wysokość zdjęcia produktu</div>
<svg class="ic" style="left:269.2px;top:1208.5px" width="9" height="9" viewBox="0 0 9 9"><path d="M4.5 0.2V8.2M0.9 2.4L8.1 6M8.1 2.4L0.9 6" stroke="#f00" stroke-width="1.7"/></svg>
<div class="abs" style="left:500px;top:1254px;width:190px;height:31px;border-radius:4px;background:#eeeeee;box-shadow:inset 0 2px 2px rgba(0,0,0,.10),inset 2px 0 2px rgba(0,0,0,.05)"></div>
<div class="abs" style="left:595px;top:1254px;width:95px;height:31px;border-radius:4px;background:#e08e95;border:1px solid #d7747c"></div>
<div class="tx" style="left:534.68px;top:1259.37px;font-size:14.5px;line-height:20px;color:#bdbdbd;transform:scaleX(0.9386);transform-origin:0.32px 0">TAK</div>
<div class="tx" style="left:630.31px;top:1259.37px;font-size:14.5px;line-height:20px;letter-spacing:-0.4346px;color:#ffffff">NIE</div>
<div class="lblbox" style="left:134.9px;top:1259.5px;width:353.6px"></div>
<div class="tx" style="left:139.92px;top:1260.39px;font-size:15.6px;line-height:20px;letter-spacing:0.2146px;color:#2e88b3">Generowanie obrazów o wysokiej rozdzielczości</div>
<div class="tx" style="left:499.30px;top:1290.75px;font-size:14px;line-height:20px;letter-spacing:-0.0155px;font-style:italic;color:#8c8c8c">Włącz, aby zoptymalizować wyświetlanie obrazów na ekranie o dużej gęstości pikseli.</div>
<div class="abs" style="left:11px;top:1341px;width:1900px;height:8px;background:#f7f8f9"></div>
<div class="abs" style="left:11px;top:1342px;width:1160px;height:30px;background:#eff1f3;border-radius:0 40px 0 0;box-shadow:0 -5px 26px rgba(0,0,0,0.05)"></div>
<div class="abs" style="left:11px;top:1341px;width:1900px;height:1px;background:linear-gradient(to right,#dcdfe1 1150px,#e8eaeb 1190px)"></div>
<div class="abs" style="left:0;top:1349px;width:1920px;height:40px;background:#eef1f2"></div>
</body></html>
